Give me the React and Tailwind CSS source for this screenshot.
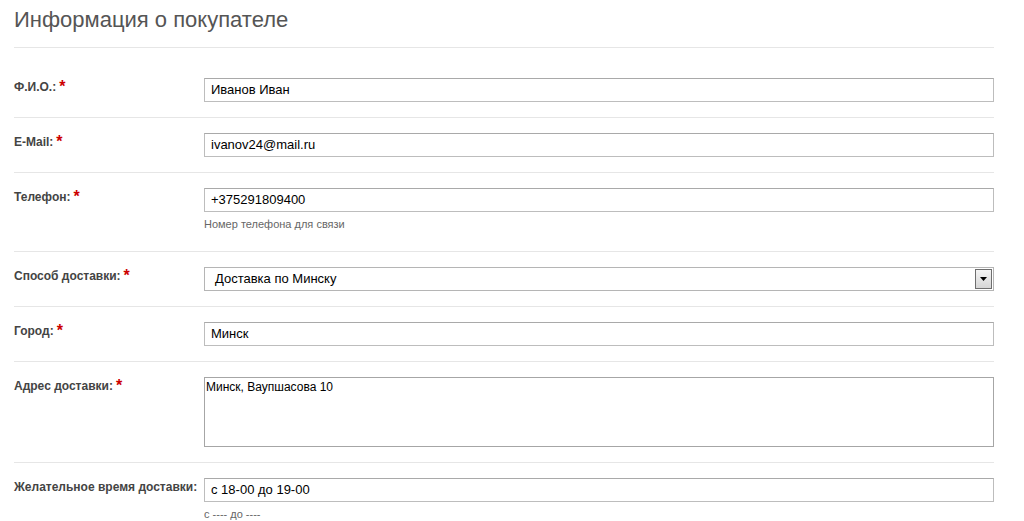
const rows = [
  { label: "Ф.И.О.:", value: "Иванов Иван", required: true },
  { label: "E-Mail:", value: "ivanov24@mail.ru", required: true },
  { label: "Телефон:", value: "+375291809400", required: true, hint: "Номер телефона для связи" },
  { label: "Способ доставки:", value: "Доставка по Минску", required: true, type: "select" },
  { label: "Город:", value: "Минск", required: true },
  { label: "Адрес доставки:", value: "Минск, Ваупшасова 10", required: true, type: "textarea" },
  { label: "Желательное время доставки:", value: "с 18-00 до 19-00", hint: "с ---- до ----" },
];

function Field({ row }) {
  if (row.type === "select") {
    return (
      <div className="h-[24px] flex items-center border border-[#b5b5b5] bg-white pl-[10px] pr-[1px]">
        <span className="flex-1 text-[13px] text-black">{row.value}</span>
        {/* dropdown button */}
        <div className="w-[17px] h-[20px] border border-[#6e6e6e] bg-gradient-to-b from-[#f4f4f4] to-[#d6d6d6] flex items-center justify-center">
          <svg width="7" height="4" viewBox="0 0 7 4">
            <path d="M0 0h7L3.5 4z" fill="#000" />
          </svg>
        </div>
      </div>
    );
  }
  if (row.type === "textarea") {
    return (
      <div className="h-[70px] border border-[#a6a6a6] bg-white px-[1px] pt-[2px] text-[12px] leading-[15px] text-black">
        {row.value}
      </div>
    );
  }
  return (
    <div className="h-[24px] flex items-center border border-[#bdbdbd] border-t-[#a9a9a9] bg-white px-[6px] text-[13px] text-black">
      {row.value}
    </div>
  );
}

export default function App() {
  return (
    <div className="min-h-screen bg-white pl-[14px] pr-[30px] font-['Liberation_Sans',Arial,sans-serif]">
      <h2 className="pt-[6px] pb-[13px] text-[22px] leading-[28px] text-[#555] border-b border-[#e6e6e6]">
        Информация о покупателе
      </h2>

      <div className="mt-[15px]">
        {rows.map((row, i) => (
          <div
            key={row.label}
            className={`flex py-[15px] ${i < rows.length - 1 ? "border-b border-[#e6e6e6]" : ""}`}
          >
            <div className="w-[190px] shrink-0 text-[12px] leading-[18px] font-bold text-[#444]">
              {row.label}
              {row.required && (
                <span className="ml-[3px] text-[16px] leading-none font-bold text-[#c00] relative top-[1px]">*</span>
              )}
            </div>
            <div className="flex-1">
              <Field row={row} />
              {row.hint && (
                <div className="mt-[5px] mb-[5px] text-[11px] leading-[14px] text-[#666]">{row.hint}</div>
              )}
            </div>
          </div>
        ))}
      </div>
    </div>
  );
}
